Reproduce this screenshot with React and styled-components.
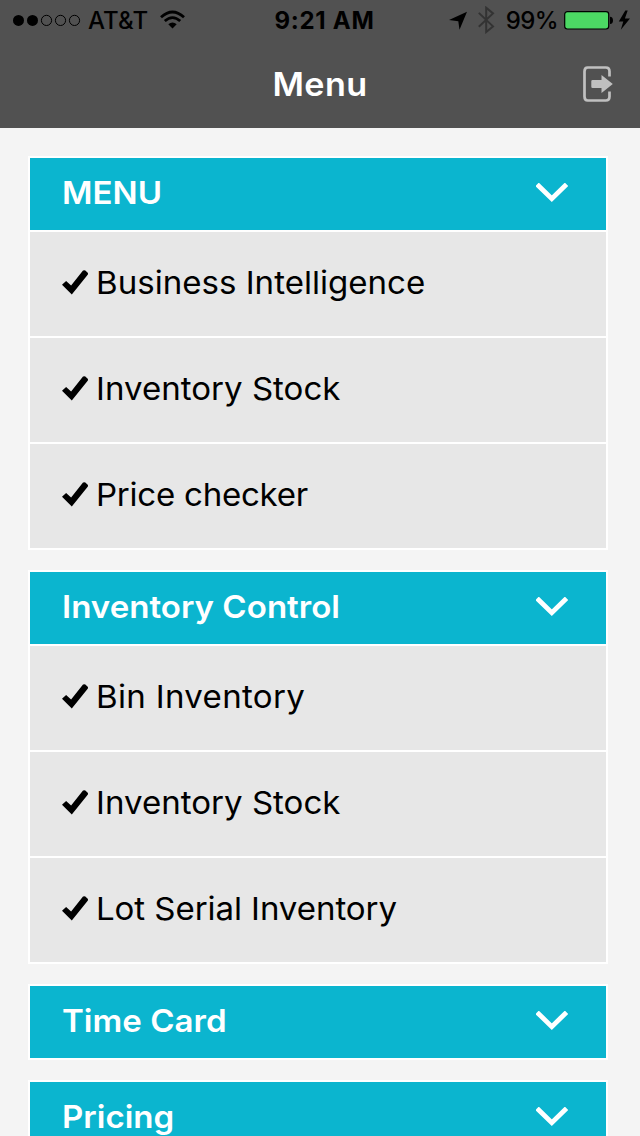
import React from "react";
import styled, { createGlobalStyle } from "styled-components";

const GlobalStyle = createGlobalStyle`
  * { box-sizing: border-box; }
  body { margin: 0; background: #f4f4f4; font-family: Inter, "Liberation Sans", sans-serif; }
`;

const Screen = styled.div`
  width: 640px;
  height: 1136px;
  overflow: hidden;
  background: #f4f4f4;
`;

const TopArea = styled.header`
  height: 128px;
  background: #515151;
`;

const StatusBar = styled.div`
  display: grid;
  grid-template-columns: 225px 1fr 225px;
  align-items: center;
  height: 40px;
  padding: 0 9px 0 13px;
  color: #000;
`;

const StatusGroup = styled.div`
  display: flex;
  align-items: center;
  height: 40px;
  justify-content: ${(p) => (p.$end ? "flex-end" : "flex-start")};
  svg { flex: none; display: block; }
`;

const Signal = styled.svg`
  margin-right: 7px;
`;

const StatusText = styled.span`
  padding-top: 1px;
  font-size: 24px;
  font-weight: 500;
  line-height: 39px;
  letter-spacing: ${(p) => p.$spacing}px;
  margin-right: ${(p) => p.$gap}px;
  white-space: nowrap;
`;

const Clock = styled.div`
  padding: 1px 0 0 5px;
  text-align: center;
  font-weight: 700;
  font-size: 24px;
  line-height: 39px;
  letter-spacing: 0.7px;
  white-space: nowrap;
`;

const NavBar = styled.div`
  display: grid;
  grid-template-columns: 60px 1fr 60px;
  align-items: center;
  height: 88px;
`;

const Title = styled.h1`
  grid-column: 2;
  margin: 0;
  padding-top: 1px;
  text-align: center;
  color: #fff;
  font-size: 32.5px;
  font-weight: 600;
  letter-spacing: 0.4px;
  transform: scaleX(1.05);
`;

const ExitButton = styled.button`
  padding: 0;
  border: 0;
  background: none;
  height: 40px;
  width: 36px;
  svg { display: block; }
`;

const Content = styled.main`
  display: flex;
  flex-direction: column;
  gap: 20px;
  padding: 28px 32px 0 28px;
`;

const Card = styled.section`
  display: flex;
  flex-direction: column;
  gap: 2px;
  padding: 2px;
  background: #fff;
`;

const CardHeader = styled.div`
  display: flex;
  align-items: center;
  justify-content: space-between;
  height: 72px;
  padding: 0 38px 2px 32px;
  background: #0bb5cf;
  color: #fff;
  svg { margin-top: -1px; }
`;

const Row = styled.div`
  display: flex;
  align-items: center;
  gap: 8px;
  height: 104px;
  padding: 0 32px 3px;
  background: #e7e7e7;
  color: #000;
`;

const Label = styled.span`
  font-size: 31.5px;
  line-height: 40px;
  white-space: nowrap;
  font-weight: ${(p) => (p.$strong ? 600 : 400)};
  letter-spacing: ${(p) => p.$spacing || 0}px;
  transform: scaleX(1.05);
  transform-origin: left center;
`;

const Chevron = () => (
  <svg width="32" height="20" viewBox="0 0 32 20">
    <path d="M2.8 3 15.8 15.6 28.8 3" fill="none" stroke="#fff" strokeWidth="4.8" strokeLinecap="square" />
  </svg>
);

const Check = () => (
  <svg width="26" height="26" viewBox="0 0 26 26">
    <path d="M0 14.8 4.1 11 9.1 15.6 21 .5 23 .3 26 3 25.9 4.4 9.8 24.6Z" fill="#000" />
  </svg>
);

const sections = [
  {
    title: "MENU",
    items: [["Business Intelligence"], ["Inventory Stock"], ["Price checker", -0.25]],
  },
  {
    title: "Inventory Control",
    items: [["Bin Inventory", 0.3], ["Inventory Stock"], ["Lot Serial Inventory", -0.08]],
  },
  { title: "Time Card", items: [] },
  { title: "Pricing", items: [] },
];

export default function App() {
  return (
    <Screen>
      <GlobalStyle />
      <TopArea>
        <StatusBar>
          <StatusGroup>
            <Signal width="68" height="12" viewBox="0 0 68 12">
              {[0, 1, 2, 3, 4].map((i) => (
                <circle key={i} cx={5.5 + i * 14} cy="6.4" r={i < 2 ? 5.5 : 5.1}
                  fill={i < 2 ? "#000" : "none"} stroke={i < 2 ? "none" : "#000"} strokeWidth="1" />
              ))}
            </Signal>
            <StatusText $gap={12} $spacing={0.1}>AT&amp;T</StatusText>
            <svg width="25" height="20" viewBox="0 0 25 20">
              <path d="M1 7.2Q12.5-3.2 24 7.2M4.8 11Q12.5 4.2 20.2 11" fill="none" stroke="#000" strokeWidth="2.8" />
              <path d="M8.3 14.2Q12.5 10.8 16.7 14.2L12.5 18.5Z" fill="#000" />
            </svg>
          </StatusGroup>
          <Clock>9:21 AM</Clock>
          <StatusGroup $end>
            <svg width="19" height="19" viewBox="0 0 19 19">
              <path d="M18 .8 10.5 18.8 9.3 10.2 0 9Z" fill="#000" />
            </svg>
            <svg width="38" height="28" viewBox="0 0 38 28">
              <path d="M10.8 6.9 25 20.4 18.2 26V1.7L25 7.4 10.8 20.8" fill="none" stroke="#333" strokeWidth="2" />
            </svg>
            <StatusText $gap={6} $spacing={-0.6}>99%</StatusText>
            <svg width="50" height="20" viewBox="0 0 50 20">
              <rect x=".7" y="1.6" width="44" height="17.4" rx="2.7" fill="#4cd964" stroke="#000" strokeWidth="1.2" />
              <path d="M46 6.8Q49 7 49 10.5T46 13.9Z" fill="#000" />
            </svg>
            <svg width="17" height="20" viewBox="0 0 17 20">
              <path d="M11.3.6 4.8 11.4H9.3L6.8 19.7 16 8.5H10.9L13.7.6Z" fill="#000" />
            </svg>
          </StatusGroup>
        </StatusBar>
        <NavBar>
          <Title>Menu</Title>
          <ExitButton aria-label="Log out">
            <svg width="36" height="40" viewBox="0 0 36 40">
              <path d="M29.5 12.5V7.5Q29.5 3.5 25.8 3.5H7.7Q4.5 3.5 4.5 7.5V32.5Q4.5 36.5 7.7 36.5H25.8Q29.5 36.5 29.5 32.5V27.5" fill="none" stroke="#c0c0c0" strokeWidth="2.7" />
              <path d="M12.6 16H21.5V11L32.8 20 21.5 29V24H12.6Q11.3 24 11.3 22.8V17.2Q11.3 16 12.6 16Z" fill="#c0c0c0" />
            </svg>
          </ExitButton>
        </NavBar>
      </TopArea>
      <Content>
        {sections.map((s) => (
          <Card key={s.title}>
            <CardHeader>
              <Label $strong>{s.title}</Label>
              <Chevron />
            </CardHeader>
            {s.items.map(([text, spacing]) => (
              <Row key={text}>
                <Check />
                <Label $spacing={spacing}>{text}</Label>
              </Row>
            ))}
          </Card>
        ))}
      </Content>
    </Screen>
  );
}
